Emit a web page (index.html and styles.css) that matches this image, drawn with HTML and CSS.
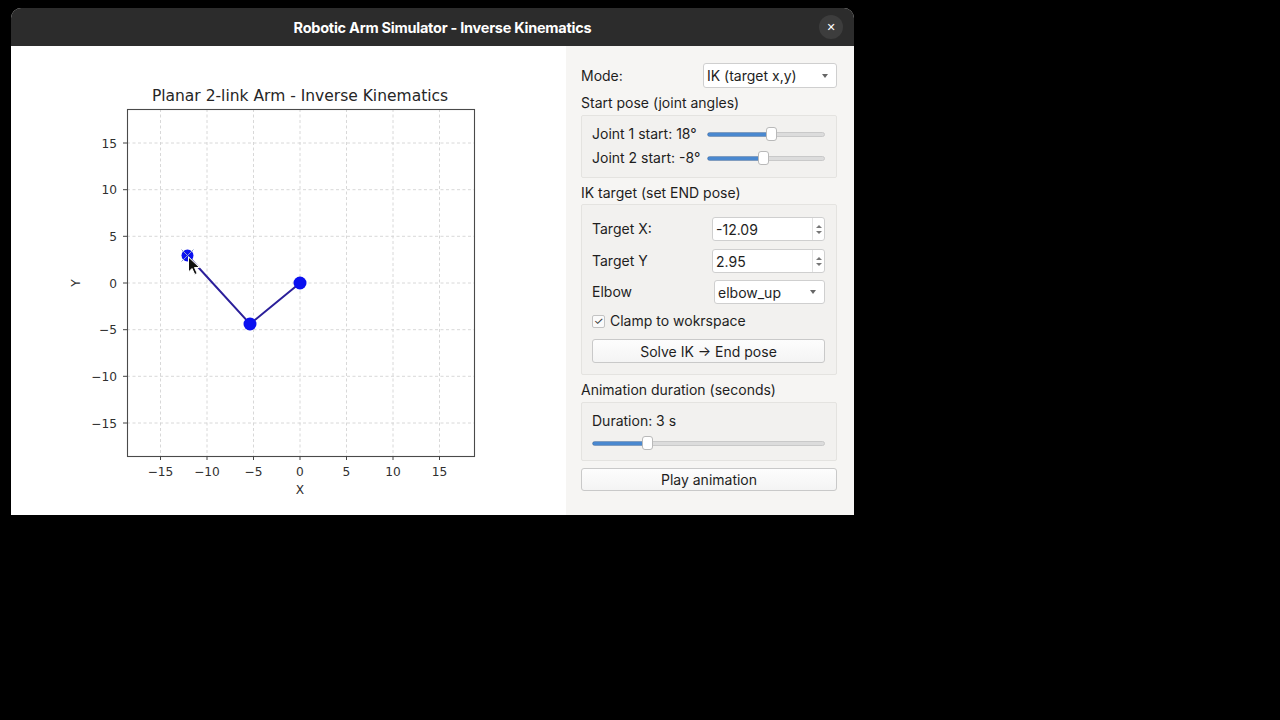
FILE: index.html
```html
<!DOCTYPE html>
<html>
<head>
<meta charset="utf-8">
<link rel="stylesheet" href="styles.css">
</head>
<body>
<div class="window">
  <div class="titlebar">
    <div class="title">Robotic Arm Simulator - Inverse Kinematics</div>
    <div class="close">&#x2715;</div>
  </div>
  <div class="content">
    <div class="figure">
      <svg width="555" height="469" viewBox="0 0 555 469" xmlns="http://www.w3.org/2000/svg">
        <text class="ptitle" x="289" y="55" text-anchor="middle">Planar 2-link Arm - Inverse Kinematics</text>
        <g class="grid">
          <line x1="149.5" y1="63" x2="149.5" y2="410"/>
          <line x1="196" y1="63" x2="196" y2="410"/>
          <line x1="242.5" y1="63" x2="242.5" y2="410"/>
          <line x1="289" y1="63" x2="289" y2="410"/>
          <line x1="335.5" y1="63" x2="335.5" y2="410"/>
          <line x1="382" y1="63" x2="382" y2="410"/>
          <line x1="428.5" y1="63" x2="428.5" y2="410"/>
          <line x1="116" y1="97" x2="463" y2="97"/>
          <line x1="116" y1="143.7" x2="463" y2="143.7"/>
          <line x1="116" y1="190.3" x2="463" y2="190.3"/>
          <line x1="116" y1="237" x2="463" y2="237"/>
          <line x1="116" y1="283.7" x2="463" y2="283.7"/>
          <line x1="116" y1="330.3" x2="463" y2="330.3"/>
          <line x1="116" y1="377" x2="463" y2="377"/>
        </g>
        <rect class="frame" x="116.5" y="63.5" width="347" height="347"/>
        <g class="ticks">
          <line x1="149.5" y1="410" x2="149.5" y2="414"/>
          <line x1="196" y1="410" x2="196" y2="414"/>
          <line x1="242.5" y1="410" x2="242.5" y2="414"/>
          <line x1="289" y1="410" x2="289" y2="414"/>
          <line x1="335.5" y1="410" x2="335.5" y2="414"/>
          <line x1="382" y1="410" x2="382" y2="414"/>
          <line x1="428.5" y1="410" x2="428.5" y2="414"/>
          <line x1="112" y1="97" x2="116" y2="97"/>
          <line x1="112" y1="143.7" x2="116" y2="143.7"/>
          <line x1="112" y1="190.3" x2="116" y2="190.3"/>
          <line x1="112" y1="237" x2="116" y2="237"/>
          <line x1="112" y1="283.7" x2="116" y2="283.7"/>
          <line x1="112" y1="330.3" x2="116" y2="330.3"/>
          <line x1="112" y1="377" x2="116" y2="377"/>
        </g>
        <g class="tl" text-anchor="middle">
          <text x="149.5" y="430">&#x2212;15</text>
          <text x="196" y="430">&#x2212;10</text>
          <text x="242.5" y="430">&#x2212;5</text>
          <text x="289" y="430">0</text>
          <text x="335.5" y="430">5</text>
          <text x="382" y="430">10</text>
          <text x="428.5" y="430">15</text>
        </g>
        <g class="tl" text-anchor="end">
          <text x="106" y="101.5">15</text>
          <text x="106" y="148.2">10</text>
          <text x="106" y="194.8">5</text>
          <text x="106" y="241.5">0</text>
          <text x="106" y="288.2">&#x2212;5</text>
          <text x="106" y="334.8">&#x2212;10</text>
          <text x="106" y="381.5">&#x2212;15</text>
        </g>
        <text class="tl" x="289" y="448" text-anchor="middle">X</text>
        <text class="tl" x="0" y="0" text-anchor="middle" transform="translate(68.5 237) rotate(-90)">Y</text>
        <polyline class="arm" points="289,237 239,278 176.5,209.5"/>
        <circle class="joint" cx="289" cy="237" r="6.5"/>
        <circle class="joint" cx="239" cy="278" r="6.5"/>
        <circle class="joint" cx="176.5" cy="209.5" r="6"/>
        <g class="xmark">
          <line x1="170.5" y1="203.5" x2="182.5" y2="215.5"/>
          <line x1="182.5" y1="203.5" x2="170.5" y2="215.5"/>
        </g>
        <polygon class="cursor" points="177.5,211 177.5,226 181,222.5 183.8,228.5 186.2,227.5 183.5,221.5 188.5,221.5"/>
      </svg>
    </div>
    <div class="panel">
      <div class="row mode-row">
        <span class="lbl">Mode:</span>
        <div class="combo mode-combo"><span>IK (target x,y)</span><span class="arrow"></span></div>
      </div>
      <div class="section-title st1">Start pose (joint angles)</div>
      <div class="group g1">
        <div class="srow">
          <span class="lbl">Joint 1 start: 18°</span>
          <div class="slider s-joint"><div class="fill" style="width:64px"></div><div class="handle" style="left:58px"></div></div>
        </div>
        <div class="srow">
          <span class="lbl">Joint 2 start: -8°</span>
          <div class="slider s-joint"><div class="fill" style="width:56px"></div><div class="handle" style="left:50px"></div></div>
        </div>
      </div>
      <div class="section-title st2">IK target (set END pose)</div>
      <div class="group g2">
        <div class="frow">
          <span class="lbl">Target X:</span>
          <div class="spin"><span class="val">-12.09</span><span class="spin-btn"><span class="up"></span><span class="down"></span></span></div>
        </div>
        <div class="frow gap8">
          <span class="lbl">Target Y</span>
          <div class="spin"><span class="val">2.95</span><span class="spin-btn"><span class="up"></span><span class="down"></span></span></div>
        </div>
        <div class="frow gap7">
          <span class="lbl">Elbow</span>
          <div class="combo elbow-combo"><span>elbow_up</span><span class="arrow"></span></div>
        </div>
        <div class="check-row">
          <span class="checkbox">&#x2713;</span><span class="lbl">Clamp to wokrspace</span>
        </div>
        <div class="button solve">Solve IK &#x2192; End pose</div>
      </div>
      <div class="section-title st3">Animation duration (seconds)</div>
      <div class="group g3">
        <div class="lbl dur">Duration: 3 s</div>
        <div class="slider s-dur"><div class="fill" style="width:55px"></div><div class="handle" style="left:49px"></div></div>
      </div>
      <div class="button play">Play animation</div>
    </div>
  </div>
</div>
</body>
</html>
```
FILE: styles.css
```css
html, body {
  margin: 0;
  padding: 0;
  background: #000;
  width: 1280px;
  height: 720px;
  overflow: hidden;
}
body {
  font-family: Inter, "Noto Sans", "DejaVu Sans", sans-serif;
}
.window {
  margin: 8px 0 0 11px;
  width: 843px;
  height: 507px;
  border-radius: 10px 10px 0 0;
  overflow: hidden;
  background: #f6f5f3;
  display: flex;
  flex-direction: column;
}
.titlebar {
  height: 38px;
  background: #2c2c2c;
  display: flex;
  align-items: center;
  flex: none;
}
.title {
  flex: 1;
  text-align: center;
  color: #fff;
  font-weight: 700;
  font-size: 14.5px;
  padding-left: 55px;
  letter-spacing: -0.25px;
}
.close {
  width: 24px;
  height: 24px;
  border-radius: 50%;
  background: #3d3d3d;
  color: #fff;
  font-size: 11px;
  font-weight: 700;
  display: flex;
  align-items: center;
  justify-content: center;
  margin-right: 11px;
}
.content {
  flex: 1;
  display: flex;
}
.figure {
  width: 555px;
  background: #fff;
  flex: none;
}
.figure svg { display: block; }
.ptitle {
  font-family: "DejaVu Sans", sans-serif;
  font-size: 15.5px;
  fill: #262626;
}
.grid line {
  stroke: #d4d4d4;
  stroke-width: 0.9;
  stroke-dasharray: 3 2.5;
}
.frame {
  fill: none;
  stroke: #4a4a4a;
  stroke-width: 1.1;
}
.ticks line {
  stroke: #444;
  stroke-width: 1;
}
.tl {
  font-family: "DejaVu Sans", sans-serif;
  font-size: 12.2px;
  fill: #303030;
}
.arm {
  fill: none;
  stroke: #2b1f9a;
  stroke-width: 2;
}
.joint { fill: #0a10f0; }
.xmark line {
  stroke: #8ea0cc;
  stroke-width: 1;
}
.cursor {
  fill: #111;
  stroke: #fff;
  stroke-width: 1;
  stroke-linejoin: round;
}
.panel {
  flex: 1;
  padding: 17px 18px 0 15px;
  color: #1e1e1e;
  font-size: 14px;
}
.lbl { line-height: 18px; }
.row {
  display: flex;
  align-items: center;
  justify-content: space-between;
}
.combo {
  box-sizing: border-box;
  background: #fff;
  border: 1px solid #cfcfcf;
  border-radius: 3px;
  display: flex;
  align-items: center;
  justify-content: space-between;
  padding: 0 8px 0 3px;
}
.mode-combo {
  width: 134px;
  height: 25px;
}
.arrow {
  width: 0;
  height: 0;
  border-left: 3.5px solid transparent;
  border-right: 3.5px solid transparent;
  border-top: 4px solid #666;
}
.section-title {
  line-height: 18px;
  margin-top: 6px;
}
.group {
  box-sizing: border-box;
  background: #f2f1ef;
  border: 1px solid #e4e3e0;
  border-radius: 2px;
  margin-top: 3px;
  padding: 0 11px 0 10px;
}
.g1 {
  height: 63px;
  padding-top: 6px;
}
.srow {
  height: 24px;
  display: flex;
  align-items: center;
  justify-content: space-between;
}
.slider {
  position: relative;
  height: 5px;
  border-radius: 3px;
  background: #dcdcdc;
  border: 1px solid #c9c9c9;
  box-sizing: border-box;
}
.s-joint { width: 118px; }
.slider .fill {
  height: 100%;
  border-radius: 3px;
  background: #4a88cf;
  box-shadow: 0 0 0 0.5px #3b72b5;
}
.slider .handle {
  position: absolute;
  top: -6px;
  width: 11px;
  height: 14px;
  box-sizing: border-box;
  background: #fff;
  border: 1px solid #b9b9b9;
  border-radius: 3px;
}
.g2 {
  height: 171px;
  margin-top: 2px;
  padding-top: 12px;
}
.frow {
  height: 24px;
  display: flex;
  align-items: center;
  justify-content: space-between;
}
.gap8 { margin-top: 8px; }
.gap7 { margin-top: 7px; }
.spin {
  box-sizing: border-box;
  width: 113px;
  height: 24px;
  background: #fff;
  border: 1px solid #cfcfcf;
  border-radius: 3px;
  display: flex;
  align-items: center;
  justify-content: space-between;
  padding-left: 3px;
}
.spin-btn {
  width: 11px;
  height: 22px;
  border-left: 1px solid #e2e2e2;
  display: flex;
  flex-direction: column;
  align-items: center;
  justify-content: center;
  gap: 3px;
}
.spin-btn .up {
  width: 0; height: 0;
  border-left: 3px solid transparent;
  border-right: 3px solid transparent;
  border-bottom: 3.5px solid #777;
}
.spin-btn .down {
  width: 0; height: 0;
  border-left: 3px solid transparent;
  border-right: 3px solid transparent;
  border-top: 3.5px solid #777;
}
.elbow-combo {
  width: 111px;
  height: 24px;
}
.check-row {
  display: flex;
  align-items: center;
  gap: 5px;
  margin-top: 8px;
  height: 18px;
}
.checkbox {
  box-sizing: border-box;
  width: 13px;
  height: 13px;
  border: 1px solid #c3c3c3;
  background: #fafafa;
  border-radius: 2px;
  font-size: 11px;
  line-height: 11px;
  text-align: center;
  color: #333;
}
.button {
  box-sizing: border-box;
  background: linear-gradient(#fdfdfd, #f4f4f4);
  border: 1px solid #c9c9c9;
  border-radius: 3px;
  display: flex;
  align-items: center;
  justify-content: center;
}
.solve {
  height: 24px;
  margin-top: 9px;
}
.g3 {
  height: 59px;
  padding-top: 9px;
}
.dur { height: 18px; }
.s-dur {
  width: 233px;
  margin-top: 11px;
}
.play {
  height: 23px;
  margin-top: 7px;
}
```
